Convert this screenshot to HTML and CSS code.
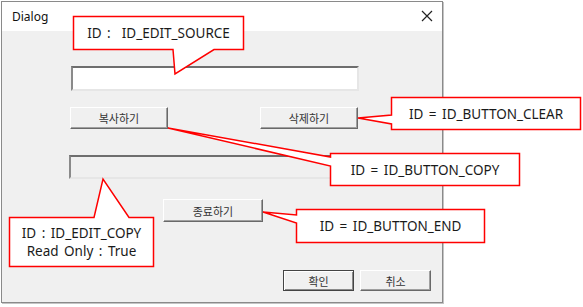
FILE: index.html
```html
<!DOCTYPE html>
<html lang="ko">
<head>
  <meta charset="UTF-8" />
  <title>Dialog</title>
  <link rel="stylesheet" href="styles.css">
</head>
<body>
  <div class="dialog">
    <div class="title-bar">
      <span class="title">Dialog</span>
      <svg class="close-icon" width="12" height="12" viewBox="0 0 12 12">
        <path d="M1 1 L11 11 M11 1 L1 11" stroke="#222" stroke-width="1.2" fill="none" />
      </svg>
    </div>
    <div class="dialog-body">
      <div class="edit edit-source"></div>
      <div class="button-row">
        <div class="btn btn-copy">복사하기</div>
        <div class="btn btn-clear">삭제하기</div>
      </div>
      <div class="edit edit-copy"></div>
      <div class="btn btn-end">종료하기</div>
      <div class="footer-row">
        <div class="btn btn-small btn-default">확인</div>
        <div class="btn btn-small">취소</div>
      </div>
    </div>
  </div>

  <!-- 설명 말풍선 -->
  <svg class="callout-lines" width="583" height="307" viewBox="0 0 583 307">
    <g fill="#fff" stroke="#f00" stroke-width="1.5" stroke-linejoin="miter">
      <path d="M73.5 16.5 H243.5 V49.5 H214 L175 74 L173 49.5 H73.5 Z" />
      <path d="M391.5 97.5 H580.5 V129.5 H391.5 V124 L358 118 L391.5 115 Z" />
      <path d="M330.5 153.5 H519.5 V185.5 H330.5 V166 L168 128 L330.5 157 Z" />
      <path d="M296.5 209.5 H484.5 V242.5 H296.5 V223 L263 212 L296.5 215 Z" />
      <path d="M9.5 217.5 H94 L103 179 L129 217.5 H153.5 V266.5 H9.5 Z" />
    </g>
  </svg>
  <div class="callout c-source">ID :&nbsp; ID_EDIT_SOURCE</div>
  <div class="callout c-clear">ID = ID_BUTTON_CLEAR</div>
  <div class="callout c-copy">ID = ID_BUTTON_COPY</div>
  <div class="callout c-end">ID = ID_BUTTON_END</div>
  <div class="callout c-edit-copy">ID : ID_EDIT_COPY<br>Read Only : True</div>
</body>
</html>
```

FILE: styles.css
```css
* {
  box-sizing: border-box;
  margin: 0;
  padding: 0;
}
body {
  background: #fff;
  font-family: "Noto Sans", "Noto Sans CJK KR", sans-serif;
  width: 583px;
  height: 307px;
  overflow: hidden;
  position: relative;
}
.dialog {
  margin: 1px 0 0 1px;
  width: 442px;
  height: 302px;
  border: 1px solid #8a8a8a;
  box-shadow: 1px 1px 0 #c4c4c4;
  background: #f0f0f0;
  display: flex;
  flex-direction: column;
}
.title-bar {
  height: 29px;
  background: #fff;
  display: flex;
  align-items: center;
  justify-content: space-between;
  padding: 0 9px 0 10px;
}
.title {
  font-family: "Noto Sans", sans-serif;
  font-size: 12px;
  color: #111;
  margin-top: -1px;
}
.close-icon {
  margin-top: -2px;
}
.dialog-body {
  display: flex;
  flex-direction: column;
  align-items: flex-start;
}
.edit {
  border-style: solid;
  border-width: 2px;
  border-color: #6e6e6e #e6e6e6 #e6e6e6 #8a8a8a;
}
.edit-source {
  margin: 35px 0 0 69px;
  width: 288px;
  height: 25px;
  background: #fff;
}
.edit-copy {
  margin: 26px 0 0 67px;
  width: 289px;
  height: 24px;
  background: #f0f0f0;
}
.btn {
  font-family: "Noto Sans CJK KR", sans-serif;
  font-size: 11px;
  color: #333;
  background: #f0f0f0;
  border: 1px solid;
  border-color: #fff #696969 #696969 #fff;
  box-shadow: inset -1px -1px 0 #a0a0a0;
  display: flex;
  align-items: center;
  justify-content: center;
  height: 22px;
}
.button-row {
  margin: 16px 0 0 68px;
  display: flex;
  gap: 92px;
}
.btn-copy,
.btn-clear {
  width: 98px;
}
.btn-end {
  margin: 20px 0 0 161px;
  width: 100px;
  height: 23px;
}
.footer-row {
  margin: 48px 0 0 281px;
  display: flex;
  gap: 6px;
}
.btn-small {
  width: 71px;
  height: 21px;
}
.btn-default {
  border-color: #444;
  box-shadow: inset 1px 1px 0 #fff, inset -1px -1px 0 #8a8a8a;
}
.callout-lines {
  position: absolute;
  left: 0;
  top: 0;
}
.callout {
  position: absolute;
  display: flex;
  align-items: center;
  justify-content: center;
  text-align: center;
  font-family: "Noto Sans", "Noto Sans CJK KR", sans-serif;
  font-size: 13.5px;
  word-spacing: 2px;
  color: #1a1a1a;
  line-height: 18px;
}
.c-source {
  left: 74px;
  top: 17px;
  width: 169px;
  height: 32px;
}
.c-clear {
  left: 392px;
  top: 98px;
  width: 188px;
  height: 31px;
}
.c-copy {
  left: 331px;
  top: 154px;
  width: 188px;
  height: 31px;
}
.c-end {
  left: 297px;
  top: 210px;
  width: 187px;
  height: 32px;
}
.c-edit-copy {
  left: 10px;
  top: 218px;
  width: 143px;
  height: 48px;
}
```
